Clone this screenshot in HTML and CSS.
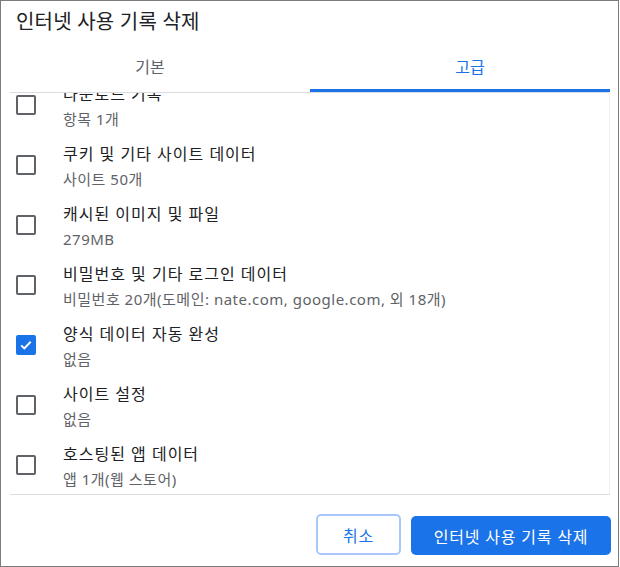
FILE: index.html
```html
<!DOCTYPE html>
<html lang="ko">
<head>
	<meta charset="UTF-8">
	<meta name="viewport" content="width=device-width, initial-scale=1.0">
	<title>인터넷 사용 기록 삭제</title>
	<link rel="stylesheet" href="styles.css">
</head>
<body>
	<div class="dialog">
		<h1 class="dialog__title">인터넷 사용 기록 삭제</h1>
		<div class="tabs">
			<div class="tabs__item tabs__item--basic">기본</div>
			<div class="tabs__item tabs__item--active">고급</div>
		</div>
		<div class="dialog__list">
			<div class="list">
				<label class="row">
					<span class="checkbox"></span>
					<span class="row__text">
						<span class="row__label">다운로드 기록</span>
						<span class="row__sub">항목 1개</span>
					</span>
				</label>
				<label class="row">
					<span class="checkbox"></span>
					<span class="row__text">
						<span class="row__label">쿠키 및 기타 사이트 데이터</span>
						<span class="row__sub">사이트 50개</span>
					</span>
				</label>
				<label class="row">
					<span class="checkbox"></span>
					<span class="row__text">
						<span class="row__label">캐시된 이미지 및 파일</span>
						<span class="row__sub">279MB</span>
					</span>
				</label>
				<label class="row">
					<span class="checkbox"></span>
					<span class="row__text">
						<span class="row__label">비밀번호 및 기타 로그인 데이터</span>
						<span class="row__sub">비밀번호 20개(도메인: nate.com, google.com, 외 18개)</span>
					</span>
				</label>
				<label class="row">
					<span class="checkbox checkbox--checked">
						<svg viewBox="0 0 20 20" width="20" height="20"><path d="M5.2 10.4l3.1 3 6.4-6.6" fill="none" stroke="#fff" stroke-width="2"/></svg>
					</span>
					<span class="row__text">
						<span class="row__label">양식 데이터 자동 완성</span>
						<span class="row__sub">없음</span>
					</span>
				</label>
				<label class="row">
					<span class="checkbox"></span>
					<span class="row__text">
						<span class="row__label">사이트 설정</span>
						<span class="row__sub">없음</span>
					</span>
				</label>
				<label class="row">
					<span class="checkbox"></span>
					<span class="row__text">
						<span class="row__label">호스팅된 앱 데이터</span>
						<span class="row__sub">앱 1개(웹 스토어)</span>
					</span>
				</label>
			</div>
		</div>
		<div class="dialog__footer">
			<button class="btn btn--cancel">취소</button>
			<button class="btn btn--primary">인터넷 사용 기록 삭제</button>
		</div>
	</div>
</body>
</html>
```

FILE: styles.css
```css
*{
	margin: 0;
	padding: 0;
	box-sizing: border-box;
}
body{
	background-color: #fff;
	font-family: "Noto Sans", "Noto Sans CJK KR", sans-serif;
	color: #202124;
}

.dialog{
	display: flex;
	flex-direction: column;
	width: 619px;
	height: 567px;
	border: 1px solid #7c7c7c;
	background-color: #fff;
}

.dialog__title{
	height: 44px;
	padding: 8px 0 0 15px;
	font-size: 20px;
	font-weight: normal;
	line-height: 26px;
	letter-spacing: 0.2px;
	color: #202124;
}

.tabs{
	display: flex;
	margin: 0 8px 0 9px;
	height: 47px;
}
.tabs__item{
	flex: 1;
	text-align: center;
	font-size: 16px;
	line-height: 22px;
	padding-top: 11px;
	color: #5f6368;
	border-bottom: 3px solid transparent;
}
.tabs__item--basic{
	padding-right: 20px;
}
.tabs__item--active{
	padding-left: 20px;
	color: #1a73e8;
	border-bottom-color: #1a73e8;
}

.dialog__list{
	height: 403px;
	margin: 0 8px 0 9px;
	overflow: hidden;
	border-top: 1px solid #dadce0;
	border-bottom: 1px solid #dadce0;
	border-right: 1px solid #f0f0f0;
}
.list{
	margin-top: -18px;
}

.row{
	display: flex;
	align-items: center;
	height: 60px;
	padding-left: 6px;
}
.checkbox{
	flex-shrink: 0;
	width: 20px;
	height: 20px;
	border: 2px solid #5f6368;
	border-radius: 2px;
	margin-right: 27px;
}
.checkbox--checked{
	border: none;
	background-color: #1a73e8;
}
.checkbox svg{
	display: block;
}
.row__text{
	display: flex;
	flex-direction: column;
	padding-top: 3px;
}
.row__label{
	font-size: 16px;
	line-height: 22px;
	letter-spacing: 1px;
	color: #202124;
}
.row__sub{
	margin-top: 3px;
	font-size: 15px;
	line-height: 22px;
	letter-spacing: 0.5px;
	color: #5f6368;
}

.dialog__footer{
	flex: 1;
	display: flex;
	justify-content: flex-end;
	align-items: flex-start;
	gap: 10px;
	padding: 19px 7px 0 0;
}
.btn{
	font-family: inherit;
	font-size: 16px;
	letter-spacing: 0.8px;
	border-radius: 5px;
	cursor: pointer;
}
.btn--cancel{
	width: 85px;
	height: 41px;
	background-color: #fff;
	color: #1a73e8;
	border: 2px solid #a8c7fa;
}
.btn--primary{
	width: 200px;
	height: 39px;
	margin-top: 2px;
	background-color: #1a73e8;
	color: #fff;
	border: none;
}
```
